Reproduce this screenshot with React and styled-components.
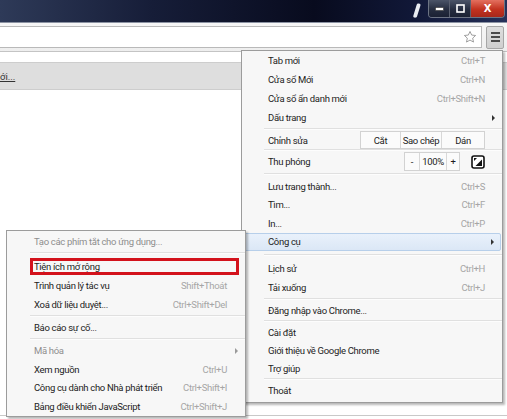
import styled, { createGlobalStyle } from "styled-components";

const GlobalStyle = createGlobalStyle`
  html, body {
    margin: 0;
    padding: 0;
  }
  body {
    width: 507px;
    height: 419px;
    overflow: hidden;
    background: #fff;
    font-family: Roboto, "Noto Sans", sans-serif;
  }
`;

const Screen = styled.div`
  position: relative;
  width: 507px;
  height: 419px;
  overflow: hidden;
  display: flex;
  flex-direction: column;
`;

const TitleBar = styled.div`
  height: 22px;
  flex: none;
  display: flex;
  justify-content: flex-end;
  align-items: flex-start;
  padding-right: 2px;
  background: linear-gradient(90deg, #2e3a58 0%, #161d38 30%, #080b1e 62%, #111838 82%, #26315a 100%);
  border-bottom: 1px solid #8c93a3;
`;

const Profile = styled.svg`
  width: 8px;
  height: 15px;
  margin: 3px 7px 0 0;
`;

const ControlGroup = styled.div`
  display: flex;
  height: 17px;
  border: 1px solid #6d7484;
  border-top: none;
  border-radius: 0 0 4px 4px;
  overflow: hidden;
`;

const WinButton = styled.div`
  width: ${({ $w }) => $w}px;
  display: flex;
  align-items: center;
  justify-content: center;
  background: ${({ $close }) =>
    $close
      ? "linear-gradient(#e3705f, #c2321f 55%, #a8281a)"
      : "linear-gradient(#4b5468, #262d40 55%, #1b2133)"};
  border-left: ${({ $first }) => ($first ? "none" : "1px solid #5a6070")};
  color: #fff;
  font: bold 10px "DejaVu Sans", sans-serif;
`;

const Toolbar = styled.div`
  height: 28px;
  flex: none;
  display: flex;
  align-items: center;
  gap: 4px;
  padding-right: 3px;
  background: linear-gradient(#f7f7f7, #eeeeee);
  border-bottom: 1px solid #c4c4c4;
`;

const Omnibox = styled.div`
  flex: 1;
  height: 20px;
  background: #fff;
  border: 1px solid #b9b9b9;
  border-left: none;
  display: flex;
  align-items: center;
  justify-content: flex-end;
  padding-right: 4px;
`;

const MenuButton = styled.div`
  width: 16px;
  height: 21px;
  background: linear-gradient(#dedede, #cfcfcf);
  border: 1px solid #a6a6a6;
  border-radius: 2px;
  display: flex;
  flex-direction: column;
  align-items: center;
  justify-content: center;
  gap: 2px;
`;

const Bar = styled.span`
  width: 9px;
  height: 2px;
  background: #4a4a4a;
`;

const Page = styled.div`
  flex: 1;
  display: flex;
  flex-direction: column;
  padding-top: 10px;
`;

const Band = styled.div`
  height: 26px;
  background: #dedede;
  border-top: 1px solid #cdcdcd;
  border-bottom: 1px solid #cdcdcd;
  display: flex;
  align-items: center;
  font-size: 9.5px;
  color: #333;
`;

const BandLink = styled.span`
  text-decoration: underline;
`;

const PageFoot = styled.div`
  margin-top: auto;
  height: 3px;
  border-top: 1px solid #c9c9c9;
`;

const Menu = styled.div`
  position: absolute;
  left: ${({ $x }) => $x}px;
  top: ${({ $y }) => $y}px;
  width: ${({ $w }) => $w}px;
  box-sizing: border-box;
  padding: ${({ $pad }) => $pad};
  background: #f7f7f7;
  border: 1px solid #9c9c9c;
  box-shadow: 2px 2px 2px rgba(0, 0, 0, 0.28);
  z-index: ${({ $z }) => $z};
  display: flex;
  flex-direction: column;
`;

const Row = styled.div`
  height: ${({ $h }) => $h}px;
  box-sizing: border-box;
  display: grid;
  grid-template-columns: 1fr auto ${({ $arrowW }) => $arrowW}px;
  align-items: center;
  padding-left: ${({ $indent }) => $indent}px;
  font-size: 9.5px;
  letter-spacing: -0.32px;
  color: ${({ $disabled }) => ($disabled ? "#8e8e8e" : "#1d1d1d")};
  white-space: nowrap;
  ${({ $hot }) =>
    $hot &&
    `
    margin: 0 1px;
    border: 1px solid #b7cfea;
    border-radius: 2px;
    background: linear-gradient(#e9f1fb, #dbe7f6);
  `}
  ${({ $boxed }) =>
    $boxed &&
    `
    margin: 3px 6px 1px 23px;
    border: 3px solid #d3121c;
  `}
`;

const Shortcut = styled.span`
  color: #a6a6a6;
  text-align: right;
`;

const Arrow = styled.span`
  justify-self: center;
  width: 0;
  height: 0;
  border-top: 3px solid transparent;
  border-bottom: 3px solid transparent;
  border-left: 3px solid ${({ $disabled }) => ($disabled ? "#9a9a9a" : "#333")};
`;

const Sep = styled.div`
  height: ${({ $h }) => $h}px;
  display: flex;
  align-items: center;
  padding-left: ${({ $indent }) => $indent}px;

  &::after {
    content: "";
    flex: 1;
    height: 1px;
    background: #e0e0e0;
    border-bottom: 1px solid #fdfdfd;
  }
`;

const Controls = styled.div`
  display: flex;
  align-items: center;
`;

const Segmented = styled.div`
  display: flex;
  height: ${({ $h }) => $h}px;
  border: 1px solid #d2d2d2;
  background: #fbfbfb;
`;

const Seg = styled.span`
  width: ${({ $w }) => $w}px;
  display: flex;
  align-items: center;
  justify-content: center;
  border-left: ${({ $first }) => ($first ? "none" : "1px solid #d8d8d8")};
  color: #1d1d1d;
`;

const FullScreen = styled.svg`
  width: 14px;
  height: 14px;
  margin-left: 11px;
`;

const mainItems = [
  { label: "Tab mới", key: "Ctrl+T", h: 19 },
  { label: "Cửa sổ Mới", key: "Ctrl+N", h: 19 },
  { label: "Cửa sổ ẩn danh mới", key: "Ctrl+Shift+N", h: 19 },
  { label: "Dấu trang", arrow: true, h: 19 },
  { sep: 4 },
  { label: "Chỉnh sửa", edit: true, h: 17 },
  { sep: 4 },
  { label: "Thu phóng", zoom: true, h: 19 },
  { sep: 6 },
  { label: "Lưu trang thành...", key: "Ctrl+S", h: 18.5 },
  { label: "Tìm...", key: "Ctrl+F", h: 18.5 },
  { label: "In...", key: "Ctrl+P", h: 18.5 },
  { label: "Công cụ", arrow: true, hot: true, h: 18.5 },
  { sep: 8 },
  { label: "Lịch sử", key: "Ctrl+H", h: 19 },
  { label: "Tải xuống", key: "Ctrl+J", h: 19 },
  { sep: 4 },
  { label: "Đăng nhập vào Chrome...", h: 18 },
  { sep: 4 },
  { label: "Cài đặt", h: 18 },
  { label: "Giới thiệu về Google Chrome", h: 18 },
  { label: "Trợ giúp", h: 18 },
  { sep: 4 },
  { label: "Thoát", h: 19 },
];

const toolItems = [
  { label: "Tạo các phím tắt cho ứng dụng...", disabled: true, h: 18 },
  { sep: 5 },
  { label: "Tiện ích mở rộng", boxed: true, h: 17 },
  { label: "Trình quản lý tác vụ", key: "Shift+Thoát", h: 19 },
  { label: "Xoá dữ liệu duyệt...", key: "Ctrl+Shift+Del", h: 18.5 },
  { sep: 5 },
  { label: "Báo cáo sự cố...", h: 18.5 },
  { sep: 4.5 },
  { label: "Mã hóa", disabled: true, arrow: true, h: 18.5 },
  { label: "Xem nguồn", key: "Ctrl+U", h: 18.5 },
  { label: "Công cụ dành cho Nhà phát triển", key: "Ctrl+Shift+I", h: 18.5 },
  { label: "Bảng điều khiển JavaScript", key: "Ctrl+Shift+J", h: 18.5 },
];

const EditButtons = () => (
  <Controls>
    <Segmented $h={16}>
      <Seg $first $w={39}>Cắt</Seg>
      <Seg $w={40}>Sao chép</Seg>
      <Seg $w={42}>Dán</Seg>
    </Segmented>
  </Controls>
);

const ZoomButtons = () => (
  <Controls>
    <Segmented $h={17}>
      <Seg $first $w={14}>-</Seg>
      <Seg $w={26}>100%</Seg>
      <Seg $w={12}>+</Seg>
    </Segmented>
    <FullScreen viewBox="0 0 14 14">
      <rect x="1" y="1" width="12" height="12" rx="2" fill="#fff" stroke="#111" strokeWidth="1.6" />
      <path d="M3 6 L3 3 L6 3 Z" fill="#111" />
      <path d="M4.5 11 L11 4.5 L11 11 Z" fill="#111" />
    </FullScreen>
  </Controls>
);

const MenuList = ({ items, indent, sepIndent, arrowW }) =>
  items.map((item, i) => {
    if (item.sep) return <Sep key={i} $h={item.sep} $indent={sepIndent} />;
    let rowIndent = indent;
    if (item.boxed) rowIndent = indent - 26;
    if (item.hot) rowIndent = indent - 2;
    return (
      <Row
        key={i}
        $h={item.h}
        $indent={rowIndent}
        $arrowW={item.boxed ? arrowW - 9 : item.hot ? arrowW - 2 : arrowW}
        $hot={item.hot}
        $boxed={item.boxed}
        $disabled={item.disabled}
      >
        <span>{item.label}</span>
        {item.edit ? <EditButtons /> : item.zoom ? <ZoomButtons /> : <Shortcut>{item.key}</Shortcut>}
        {item.arrow ? <Arrow $disabled={item.disabled} /> : <span />}
      </Row>
    );
  });

export default function App() {
  return (
    <>
      <GlobalStyle />
      <Screen>
        <TitleBar>
          <Profile viewBox="0 0 8 15">
            <path d="M5.5 0.5 C7.5 0.5 7.8 1.5 7.3 3 L4 13.5 C3.6 14.5 2.5 14.8 1.3 14.6 C0.3 14.4 0.1 13.6 0.4 12.6 L3.6 2 C4 0.9 4.6 0.5 5.5 0.5 Z" fill="#e9ecf2" />
          </Profile>
          <ControlGroup>
            <WinButton $first $w={20}>
              <svg width="9" height="4" viewBox="0 0 9 4">
                <rect x="0.5" y="0.5" width="8" height="3" fill="#fff" stroke="#333" strokeWidth="0.6" />
              </svg>
            </WinButton>
            <WinButton $w={20}>
              <svg width="9" height="9" viewBox="0 0 9 9">
                <rect x="1" y="1" width="7" height="7" fill="none" stroke="#fff" strokeWidth="1.6" />
              </svg>
            </WinButton>
            <WinButton $close $w={33}>X</WinButton>
          </ControlGroup>
        </TitleBar>
        <Toolbar>
          <Omnibox>
            <svg width="14" height="14" viewBox="0 0 24 24">
              <path
                d="M12 2.5l2.9 6.2 6.7.7-5 4.6 1.4 6.7L12 17.3l-6 3.4 1.4-6.7-5-4.6 6.7-.7z"
                fill="#fff"
                stroke="#8a8a8a"
                strokeWidth="1.4"
                strokeLinejoin="round"
              />
            </svg>
          </Omnibox>
          <MenuButton>
            <Bar />
            <Bar />
            <Bar />
          </MenuButton>
        </Toolbar>
        <Page>
          <Band>
            <BandLink>ới...</BandLink>
          </Band>
          <PageFoot />
        </Page>
        <Menu $x={241} $y={50} $w={262} $pad="0 0 2px" $z={2}>
          <MenuList items={mainItems} indent={26} sepIndent={22} arrowW={17} />
        </Menu>
        <Menu $x={6} $y={230} $w={240} $pad="1px 0 0" $z={3}>
          <MenuList items={toolItems} indent={27} sepIndent={23} arrowW={18} />
        </Menu>
      </Screen>
    </>
  );
}
